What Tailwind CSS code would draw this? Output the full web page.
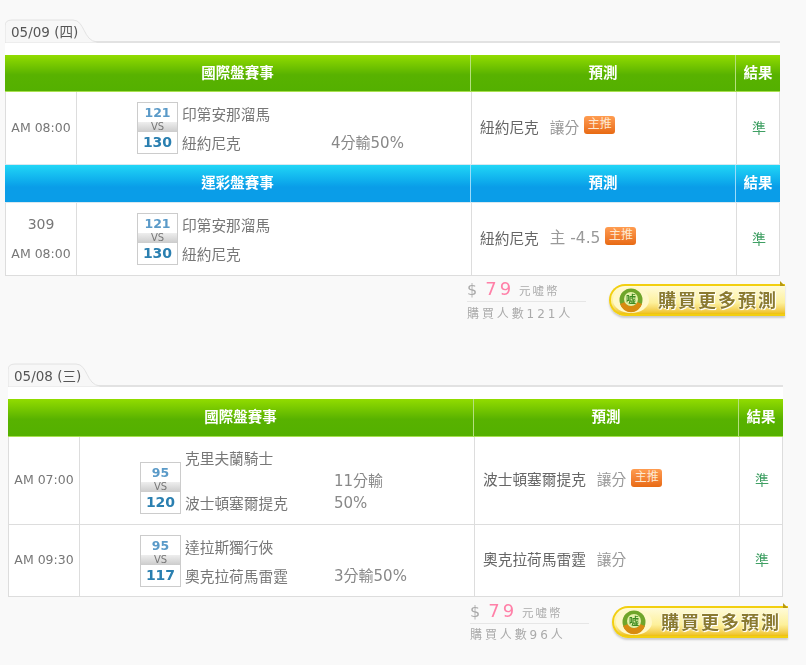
<!DOCTYPE html>
<html lang="zh-Hant">
<head>
<meta charset="UTF-8">
<title>預測</title>
<script src="https://cdn.jsdelivr.net/npm/@tailwindcss/browser@4"></script>
</head>
<body class="bg-[#f9f9f9] font-['DejaVu_Sans','Noto_Sans_CJK_TC',sans-serif] text-[#666] overflow-hidden">
<div class="h-[665px] pt-[19px] blur-[0.5px]">

  <!-- 05/09 -->
  <section class="ml-[5px] w-[775px]">
    <div class="relative h-[24px] border-b-2 border-[#e2e2e2]">
      <svg class="absolute left-0 top-0" width="92" height="24" viewBox="0 0 92 24"><path d="M0 24V7Q0 1 7 1H68C80 1 78 22 92 23V24Z" fill="#f7f7f7" stroke="#e2e2e2"/></svg>
      <span class="absolute left-[6px] top-[3px] text-[13.5px] text-[#555]">05/09 (四)</span>
    </div>
    <div class="bg-white pt-[12px]">
      <div class="grid grid-cols-[466px_265px_44px] h-[37px] bg-gradient-to-b from-[#92dc00] via-[#58b200] via-55% to-[#54b000] border-b border-[#a8e050] text-white text-[14.5px] font-bold text-center leading-[36px]">
        <div class="border-r border-[#b5e080]">國際盤賽事</div>
        <div class="border-r border-[#b5e080]">預測</div>
        <div>結果</div>
      </div>
      <div class="grid grid-cols-[71px_395px_265px_44px] h-[72px] border-x border-[#ddd]">
        <div class="flex items-center justify-center border-r border-[#ddd] text-[12.5px] text-[#777]">AM 08:00</div>
        <div class="flex items-center pl-[60px] border-r border-[#ddd]">
          <div class="flex items-end">
            <div class="w-[41px] h-[52px] border border-[#ccc] bg-white text-center">
              <div class="h-[19px] text-[12.5px] font-bold leading-[19px] text-[#5a9ac8]">121</div>
              <div class="h-[10px] bg-gradient-to-b from-[#eee] to-[#ccc] text-[10px] leading-[10px] text-[#777]">VS</div>
              <div class="h-[21px] text-[14px] font-bold leading-[21px] text-[#2a7fb0]">130</div>
            </div>
            <div class="w-[153px] pl-[4px] pt-[1px] flex flex-col gap-[8px] text-[14.7px] leading-[21px] text-[#777]">
              <div>印第安那溜馬</div>
              <div>紐約尼克</div>
            </div>
            <div class="w-[78px] text-[15px] leading-[21px] text-[#888]">4分輸50%</div>
          </div>
        </div>
        <div class="flex items-center pl-[8px] border-r border-[#ddd] text-[14.7px]">
          <span class="text-[#666]">紐約尼克</span><span class="ml-[11px] text-[#999]">讓分</span>
          <span class="ml-[5px] -translate-y-[3px] w-[31px] h-[18px] rounded-[3px] bg-gradient-to-b from-[#ff9c50] to-[#e86a10] text-center text-[12px] leading-[17px] text-[#fde8d0]">主推</span>
        </div>
        <div class="flex items-center justify-center text-[14px] text-[#3f9f63]">準</div>
      </div>
      <div class="grid grid-cols-[466px_265px_44px] h-[39px] bg-gradient-to-b from-[#22d6f6] via-[#0a9de8] via-60% to-[#0a9de8] border-y border-[#d8e8f0] text-white text-[14.5px] font-bold text-center leading-[37px]">
        <div class="border-r border-[#9cdcf8]">運彩盤賽事</div>
        <div class="border-r border-[#9cdcf8]">預測</div>
        <div>結果</div>
      </div>
      <div class="grid grid-cols-[71px_395px_265px_44px] h-[73px] border-x border-b border-[#ddd]">
        <div class="flex flex-col items-center justify-center gap-[12px] border-r border-[#ddd] text-[#777]">
          <div class="text-[14px] leading-[17px]">309</div>
          <div class="text-[12.5px] leading-[17px]">AM 08:00</div>
        </div>
        <div class="flex items-center pl-[60px] border-r border-[#ddd]">
          <div class="flex items-end">
            <div class="w-[41px] h-[52px] border border-[#ccc] bg-white text-center">
              <div class="h-[19px] text-[12.5px] font-bold leading-[19px] text-[#5a9ac8]">121</div>
              <div class="h-[10px] bg-gradient-to-b from-[#eee] to-[#ccc] text-[10px] leading-[10px] text-[#777]">VS</div>
              <div class="h-[21px] text-[14px] font-bold leading-[21px] text-[#2a7fb0]">130</div>
            </div>
            <div class="w-[153px] pl-[4px] pt-[1px] flex flex-col gap-[8px] text-[14.7px] leading-[21px] text-[#777]">
              <div>印第安那溜馬</div>
              <div>紐約尼克</div>
            </div>
          </div>
        </div>
        <div class="flex items-center pl-[8px] border-r border-[#ddd] text-[14.7px]">
          <span class="text-[#666]">紐約尼克</span><span class="ml-[11px] text-[15.5px] text-[#999]">主 -4.5</span>
          <span class="ml-[5px] -translate-y-[3px] w-[31px] h-[18px] rounded-[3px] bg-gradient-to-b from-[#ff9c50] to-[#e86a10] text-center text-[12px] leading-[17px] text-[#fde8d0]">主推</span>
        </div>
        <div class="flex items-center justify-center text-[14px] text-[#3f9f63]">準</div>
      </div>
    </div>
    <div class="flex justify-end h-[87px] -mr-[5px]">
      <div class="w-[142px] pt-[1px]">
        <div class="w-[119px] h-[25px] border-b border-[#e6e6e6] leading-[24px] whitespace-nowrap text-[#aaa]">
          <span class="text-[16px]">$</span><span class="ml-[8px] text-[18px] tracking-[3px] text-[#ff80a8]">79</span><span class="ml-[5px] text-[11.5px] tracking-[2px]">元嘘幣</span>
        </div>
        <div class="mt-[3px] text-[12px] tracking-[2.9px] leading-[18px] text-[#aaa]">購買人數121人</div>
      </div>
      <div class="relative mt-[8px] w-[176px] h-[32px] flex items-center rounded-l-[16px] border-2 border-r-0 border-[#f2cf10] bg-gradient-to-b from-[#fffbd8] via-[#fdf09a] via-60% to-[#eec000] shadow-[0_2px_2px_#ccc]">
        <span class="absolute right-0 -top-[5px] w-0 h-0 border-l-[5px] border-t-[5px] border-l-[#b89a10] border-t-transparent"></span>
        <svg class="ml-[1px] shrink-0" width="38" height="28" viewBox="0 0 38 28"><ellipse cx="19" cy="14" rx="18" ry="13" fill="#fff8c8"/><circle cx="19" cy="14" r="11.5" fill="#6fa52a"/><path d="M8 18A11.5 11.5 0 0 0 30 18L25 16A6.5 6.5 0 0 1 13 16Z" fill="#d88a10"/><circle cx="19" cy="13" r="7" fill="#e4f0a8"/><text x="19" y="17" font-size="10" font-weight="700" fill="#3c8a20" text-anchor="middle">嘘</text></svg>
        <span class="ml-[8px] whitespace-nowrap text-[18px] font-bold tracking-[2px] text-[#8a7a30] [text-shadow:1px_1px_0_#fff,0_0_2px_#fff,0_0_2px_#fff]">購買更多預測</span>
      </div>
    </div>
  </section>

  <!-- 05/08 -->
  <section class="ml-[8px] w-[775px]">
    <div class="relative h-[24px] border-b-2 border-[#e2e2e2]">
      <svg class="absolute left-0 top-0" width="92" height="24" viewBox="0 0 92 24"><path d="M0 24V7Q0 1 7 1H68C80 1 78 22 92 23V24Z" fill="#f7f7f7" stroke="#e2e2e2"/></svg>
      <span class="absolute left-[6px] top-[3px] text-[13.5px] text-[#555]">05/08 (三)</span>
    </div>
    <div class="bg-white pt-[12px]">
      <div class="grid grid-cols-[466px_265px_44px] h-[38px] bg-gradient-to-b from-[#92dc00] via-[#58b200] via-55% to-[#54b000] border-b border-[#a8e050] text-white text-[14.5px] font-bold text-center leading-[37px]">
        <div class="border-r border-[#b5e080]">國際盤賽事</div>
        <div class="border-r border-[#b5e080]">預測</div>
        <div>結果</div>
      </div>
      <div class="grid grid-cols-[71px_395px_265px_44px] h-[88px] border-x border-b border-[#ddd]">
        <div class="flex items-center justify-center border-r border-[#ddd] text-[12.5px] text-[#777]">AM 07:00</div>
        <div class="flex items-center pl-[60px] border-r border-[#ddd]">
          <div class="flex items-end">
            <div class="w-[41px] h-[52px] border border-[#ccc] bg-white text-center">
              <div class="h-[19px] text-[12.5px] font-bold leading-[19px] text-[#5a9ac8]">95</div>
              <div class="h-[10px] bg-gradient-to-b from-[#eee] to-[#ccc] text-[10px] leading-[10px] text-[#777]">VS</div>
              <div class="h-[21px] text-[14px] font-bold leading-[21px] text-[#2a7fb0]">120</div>
            </div>
            <div class="w-[153px] pl-[4px] flex flex-col gap-[24px] text-[14.7px] leading-[21px] text-[#777]">
              <div>克里夫蘭騎士</div>
              <div>波士頓塞爾提克</div>
            </div>
            <div class="w-[78px] text-[15px] leading-[22px] text-[#888]">11分輸50%</div>
          </div>
        </div>
        <div class="flex items-center pl-[8px] border-r border-[#ddd] text-[14.7px]">
          <span class="text-[#666]">波士頓塞爾提克</span><span class="ml-[11px] text-[#999]">讓分</span>
          <span class="ml-[5px] -translate-y-[3px] w-[31px] h-[18px] rounded-[3px] bg-gradient-to-b from-[#ff9c50] to-[#e86a10] text-center text-[12px] leading-[17px] text-[#fde8d0]">主推</span>
        </div>
        <div class="flex items-center justify-center text-[14px] text-[#3f9f63]">準</div>
      </div>
      <div class="grid grid-cols-[71px_395px_265px_44px] h-[72px] border-x border-b border-[#ddd]">
        <div class="flex items-center justify-center border-r border-[#ddd] text-[12.5px] text-[#777]">AM 09:30</div>
        <div class="flex items-center pl-[60px] border-r border-[#ddd]">
          <div class="flex items-end">
            <div class="w-[41px] h-[52px] border border-[#ccc] bg-white text-center">
              <div class="h-[19px] text-[12.5px] font-bold leading-[19px] text-[#5a9ac8]">95</div>
              <div class="h-[10px] bg-gradient-to-b from-[#eee] to-[#ccc] text-[10px] leading-[10px] text-[#777]">VS</div>
              <div class="h-[21px] text-[14px] font-bold leading-[21px] text-[#2a7fb0]">117</div>
            </div>
            <div class="w-[153px] pl-[4px] flex flex-col gap-[8px] text-[14.7px] leading-[21px] text-[#777]">
              <div>達拉斯獨行俠</div>
              <div>奧克拉荷馬雷霆</div>
            </div>
            <div class="w-[78px] text-[15px] leading-[21px] text-[#888]">3分輸50%</div>
          </div>
        </div>
        <div class="flex items-center pl-[8px] border-r border-[#ddd] text-[14.7px]">
          <span class="text-[#666]">奧克拉荷馬雷霆</span><span class="ml-[11px] text-[#999]">讓分</span>
        </div>
        <div class="flex items-center justify-center text-[14px] text-[#3f9f63]">準</div>
      </div>
    </div>
    <div class="flex justify-end mt-[1px] -mr-[5px]">
      <div class="w-[142px] pt-[1px]">
        <div class="w-[119px] h-[25px] border-b border-[#e6e6e6] leading-[24px] whitespace-nowrap text-[#aaa]">
          <span class="text-[16px]">$</span><span class="ml-[8px] text-[18px] tracking-[3px] text-[#ff80a8]">79</span><span class="ml-[5px] text-[11.5px] tracking-[2px]">元嘘幣</span>
        </div>
        <div class="mt-[2px] text-[12px] tracking-[2.9px] leading-[18px] text-[#aaa]">購買人數96人</div>
      </div>
      <div class="relative mt-[8px] w-[176px] h-[32px] flex items-center rounded-l-[16px] border-2 border-r-0 border-[#f2cf10] bg-gradient-to-b from-[#fffbd8] via-[#fdf09a] via-60% to-[#eec000] shadow-[0_2px_2px_#ccc]">
        <span class="absolute right-0 -top-[5px] w-0 h-0 border-l-[5px] border-t-[5px] border-l-[#b89a10] border-t-transparent"></span>
        <svg class="ml-[1px] shrink-0" width="38" height="28" viewBox="0 0 38 28"><ellipse cx="19" cy="14" rx="18" ry="13" fill="#fff8c8"/><circle cx="19" cy="14" r="11.5" fill="#6fa52a"/><path d="M8 18A11.5 11.5 0 0 0 30 18L25 16A6.5 6.5 0 0 1 13 16Z" fill="#d88a10"/><circle cx="19" cy="13" r="7" fill="#e4f0a8"/><text x="19" y="17" font-size="10" font-weight="700" fill="#3c8a20" text-anchor="middle">嘘</text></svg>
        <span class="ml-[8px] whitespace-nowrap text-[18px] font-bold tracking-[2px] text-[#8a7a30] [text-shadow:1px_1px_0_#fff,0_0_2px_#fff,0_0_2px_#fff]">購買更多預測</span>
      </div>
    </div>
  </section>
</div>
</body>
</html>
